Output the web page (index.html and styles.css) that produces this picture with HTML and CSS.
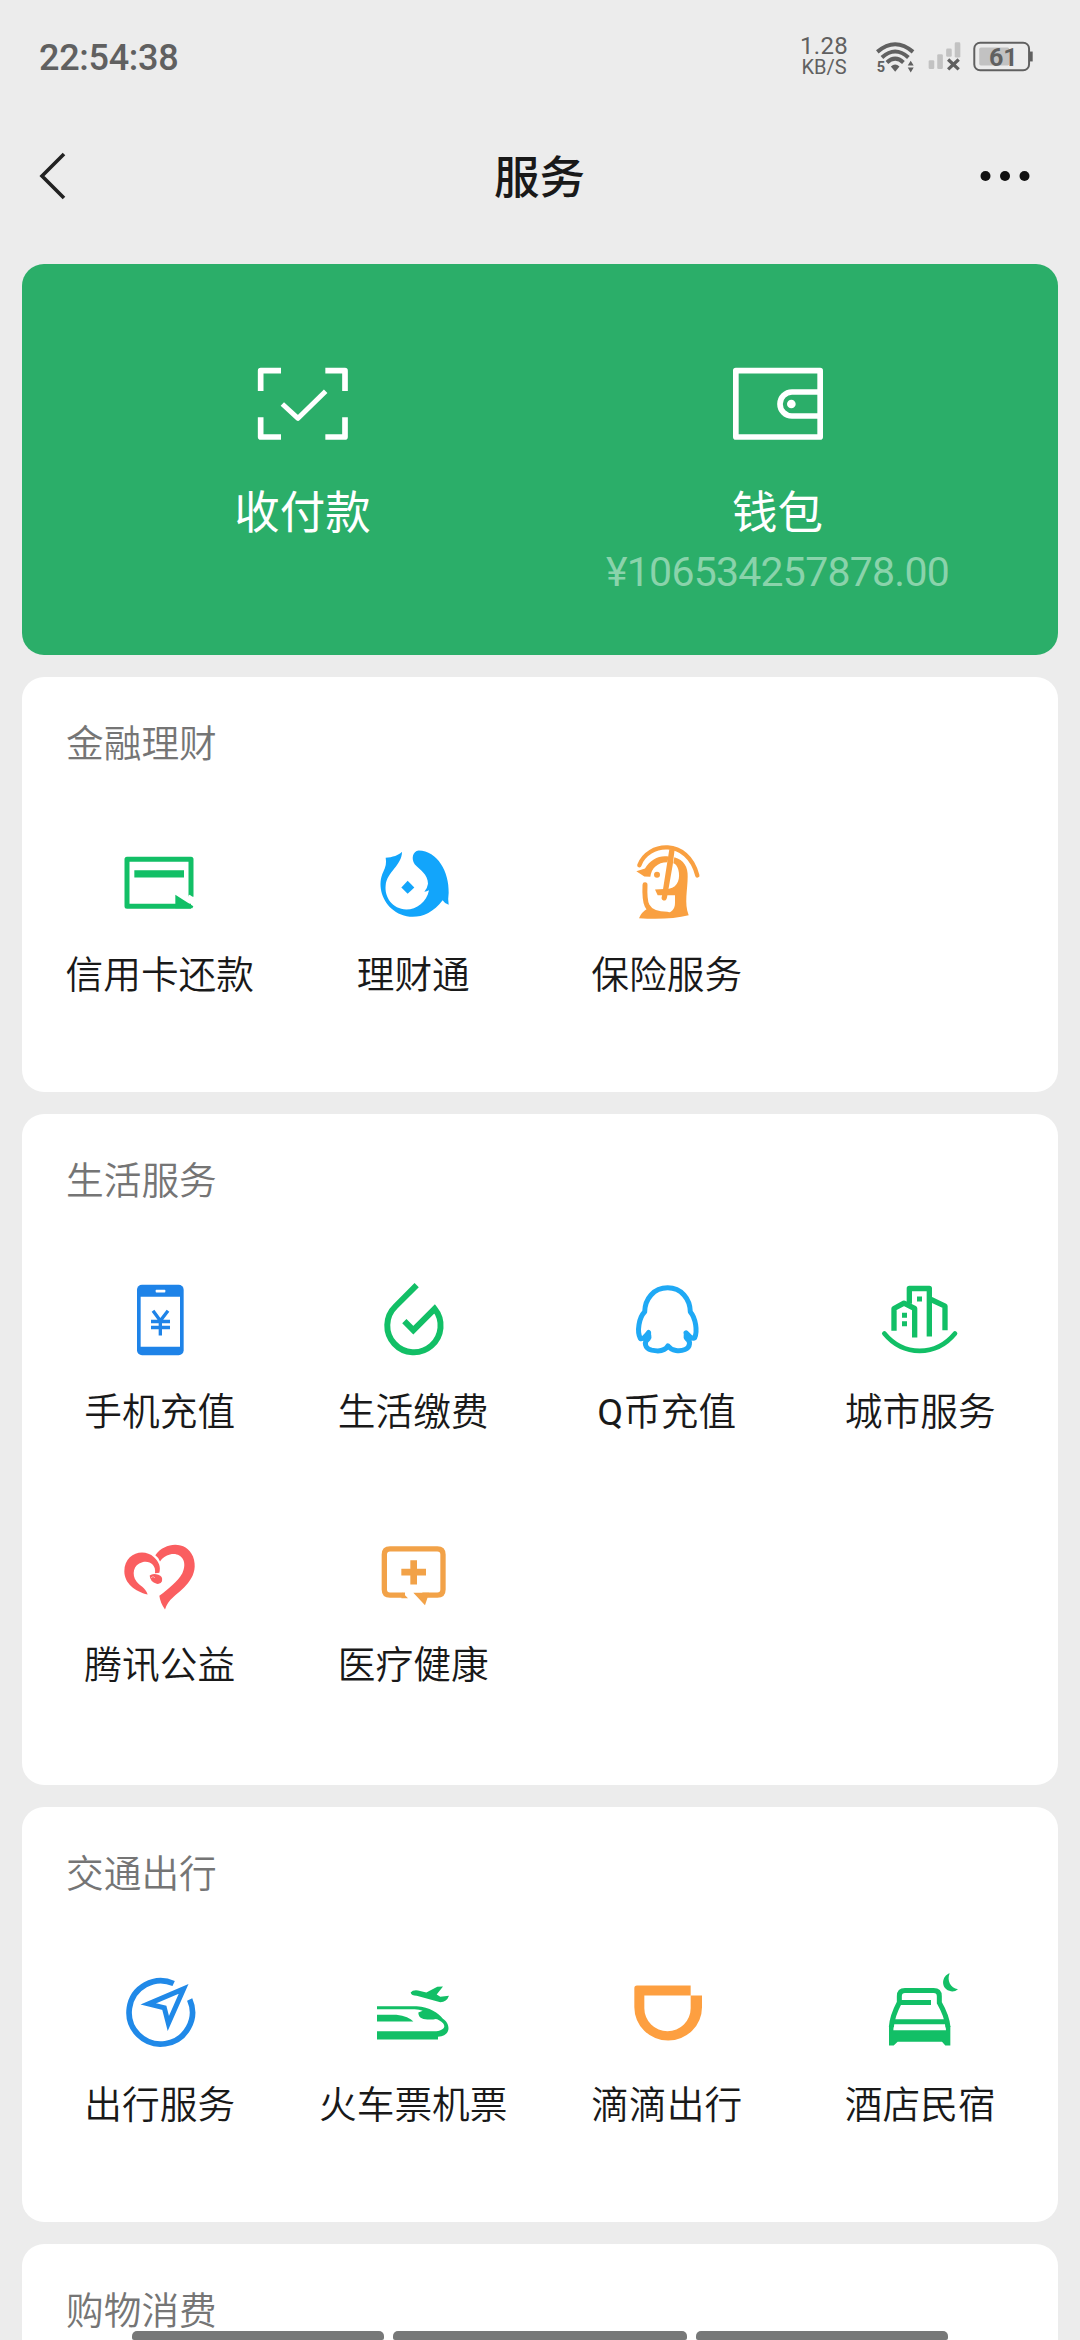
FILE: index.html
```html
<!DOCTYPE html>
<html lang="zh-CN">
<head>
<meta charset="utf-8">
<title>服务</title>
<link rel="stylesheet" href="styles.css">
</head>
<body>
<div class="screen">
  <header class="status">
    <span class="clock">22:54:38</span>
    <div class="status-right">
      <div class="speed"><span class="speed-num">1.28</span><span class="speed-unit">KB/S</span></div>
      <svg class="wifi" viewBox="340 110 130 110">
        <g fill="none" stroke="#606060" stroke-width="12">
          <path d="M350 151Q404 105 458 151"/>
          <path d="M364 168Q404 132 444 168"/>
          <path d="M379 183Q404 160 429 183"/>
        </g>
        <path d="M391 195Q404 183 417 195L404 211Z" fill="#606060"/>
        <path d="M442 192L451 178L460 192ZM442 198L460 198L451 213Z" fill="#606060"/>
        <text class="wifi-five" x="348" y="212">5</text>
      </svg>
      <svg class="signal" viewBox="500 115 104 100">
        <g fill="#c2c2c2">
          <rect x="504" y="176" width="17" height="27" rx="4"/>
          <rect x="530" y="158" width="17" height="45" rx="4"/>
          <rect x="557" y="141" width="17" height="25" rx="4"/>
          <rect x="583" y="122" width="17" height="46" rx="4"/>
        </g>
        <path d="M563 174L595 204M595 174L563 204" stroke="#606060" stroke-width="10"/>
      </svg>
      <svg class="battery" viewBox="633 115 186 100">
        <rect x="654" y="138" width="91" height="54" rx="5" fill="#c2c2c2"/>
        <rect x="639" y="123" width="166" height="84" rx="18" fill="none" stroke="#606060" stroke-width="6"/>
        <path d="M806 150h10v30h-10z" fill="#606060"/>
        <text class="battery-level" x="727" y="195">61</text>
      </svg>
    </div>
  </header>

  <nav class="titlebar">
    <svg class="back" viewBox="0 0 30 52"><path d="M26 4L4 26L26 48" fill="none" stroke="#222" stroke-width="3.6"/></svg>
    <h1 class="title">服务</h1>
    <svg class="more" viewBox="0 0 50 12"><g fill="#111"><circle cx="5.500" cy="6" r="5"/><circle cx="25" cy="6" r="5"/><circle cx="44.500" cy="6" r="5"/></g></svg>
  </nav>

  <main class="cards">
    <section class="pay">
      <div class="pay-item">
        <svg class="pay-icon" viewBox="168 111 276 222">
          <g fill="none" stroke="#fff" stroke-width="17" stroke-linejoin="round">
            <path d="M179 183V122H240M373 122H432V183M432 262V321H373M240 321H179V262"/>
            <path d="M244 222L291 265L374 184" stroke-width="15"/>
          </g>
        </svg>
        <span class="pay-label">收付款</span>
      </div>
      <div class="pay-item">
        <svg class="pay-icon" viewBox="453 111 276 222">
          <g fill="none" stroke="#fff" stroke-width="17">
            <rect x="464.500" y="122" width="253" height="199" stroke-linejoin="round"/>
            <path d="M717 186H633A36 36 0 0 0 633 258H717"/>
          </g>
          <circle cx="631" cy="222" r="13" fill="#fff"/>
        </svg>
        <span class="pay-label">钱包</span>
        <span class="amount">¥106534257878.00</span>
      </div>
    </section>

    <section class="card">
      <h2 class="heading">金融理财</h2>
      <div class="grid">
        <div class="item">
          <svg class="icon" viewBox="344 595.500 270 270">
            <path d="M572 772V659H380V800H572" fill="none" stroke="#12bf66" stroke-width="15" stroke-linejoin="round"/>
            <path d="M402 692H551V714H402ZM525 766L579 800L576 806H525Z" fill="#12bf66"/>
            <path d="M562 770L582 783V776L568 766Z" fill="#fff"/>
          </svg>
          <span class="label">信用卡还款</span>
        </div>
        <div class="item">
          <svg class="icon" viewBox="55 55.500 270 270" fill="#12a5fb">
            <path d="M157 97C148 107 128 114 108 115C111 131 108 143 101 157C83 193 95 240 125 267C164 303 233 304 279 242Q286 253 297 256Q294 242 297 220C299 157 263 94 207 93C189 95 184 118 195 134C210 151 235 163 235 193Q233 207 224 217Q231 216 238 212C231 247 201 270 170 270C128 268 104 233 108 197C112 158 157 137 157 97Z"/>
            <path d="M174 184L194 204L174 223L155 204Z"/>
          </svg>
          <span class="label">理财通</span>
        </div>
        <div class="item">
          <svg class="icon" viewBox="815 55.500 270 270" fill="#f9a041">
            <path d="M867 137C892 68 1012 54 1041 168" fill="none" stroke="#f9a041" stroke-width="13" stroke-linecap="round"/>
            <path d="M858 155L884 147C900 119 928 106 955 111L951 128C921 128 903 147 900 172L882 171Z"/>
            <path d="M884 196C882 244 880 284 951 284" fill="none" stroke="#f9a041" stroke-width="15" stroke-linecap="round"/>
            <path d="M957 89H973L967 137L950 234Q948 245 939 243Q931 240 935 229L945 165Z"/>
            <path d="M972 113C1001 121 1013 143 1012 171C1012 211 1001 251 1015 287Q955 302 866 296Q873 278 892 267Q911 285 942 282C963 281 974 271 974 250V227H922L914 210L956 208C985 203 990 174 984 151Q980 134 969 131Z"/>
            <circle cx="920" cy="166" r="9"/>
          </svg>
          <span class="label">保险服务</span>
        </div>
      </div>
    </section>

    <section class="card card-tall">
      <h2 class="heading">生活服务</h2>
      <div class="grid">
        <div class="item">
          <svg class="icon" viewBox="194 73.500 270 270">
            <rect x="260" y="103" width="140" height="211" rx="15" fill="#1e83e8"/>
            <path d="M271 139H389V289H271Z" fill="#fff"/>
            <rect x="316" y="118" width="29" height="8" rx="2" fill="#fff"/>
            <path d="M308 181L330 211L353 181M330 211V255M302 213H359M302 231H359" fill="none" stroke="#1e83e8" stroke-width="10"/>
          </svg>
          <span class="label">手机充值</span>
        </div>
        <div class="item">
          <svg class="icon" viewBox="955 73.500 270 270">
            <path d="M1101 104L1037 168A80 80 0 1 0 1155 175L1091 239L1064 212" fill="none" stroke="#12bf66" stroke-width="18"/>
          </svg>
          <span class="label">生活缴费</span>
        </div>
        <div class="item">
          <svg class="icon" viewBox="185 73.500 270 270">
            <path d="M322 112C280 112 254 145 253 184C236 202 229 241 240 264C247 268 257 255 265 246C263 258 270 259 264 265C250 273 252 293 274 299C297 304 315 300 323 286C334 302 359 303 374 297C391 290 391 271 379 264C374 258 380 257 377 247C387 257 397 267 403 262C412 241 406 203 390 184C389 145 363 112 322 112Z" fill="none" stroke="#1fa9f5" stroke-width="15" stroke-linejoin="round"/>
          </svg>
          <span class="label"><span class="latin">Q</span>币充值</span>
        </div>
        <div class="item">
          <svg class="icon" viewBox="946 73.500 270 270">
            <g fill="none" stroke="#12bf66" stroke-width="16" stroke-linejoin="round">
              <path d="M1003 241V174L1033 158L1065 174V261"/>
              <path d="M1049 160V114H1109V258M1114 147L1156 167V239"/>
              <path d="M974 249Q1017 301 1080 301Q1143 301 1186 249" stroke-width="14" stroke-linecap="round"/>
            </g>
            <path d="M1027 187h15v15h-15zM1027 212h15v15h-15zM1072 138h15v15h-15z" fill="#12bf66"/>
          </svg>
          <span class="label">城市服务</span>
        </div>
        <div class="item">
          <svg class="icon" viewBox="194 49.500 270 270">
            <path d="M292 249C254 240 222 215 222 179C222 125 280 108 311 137C326 151 332 166 327 184L314 185C318 159 296 146 276 152C248 159 244 190 258 209C267 223 285 226 292 249Z" fill="#fa5e60"/>
            <path d="M315 131C345 90 408 88 428 135C449 193 401 229 370 256Q351 272 344 294Q330 275 327 253C355 231 381 211 396 185C414 148 390 121 359 129Q340 133 329 150Q326 139 315 131Z" fill="#fa5e60"/>
            <path d="M298 192Q308 184 324 190Q338 194 335 209Q331 219 319 217Q299 211 298 192Z" fill="#fa5e60"/>
            <path d="M302 199L308 195L314 199" fill="none" stroke="#fff" stroke-width="2" opacity=".7"/>
          </svg>
          <span class="label">腾讯公益</span>
        </div>
        <div class="item">
          <svg class="icon" viewBox="955 49.500 270 270">
            <path d="M1066 251H1021Q1004 251 1004 234V129Q1004 112 1021 112H1163Q1180 112 1180 129V234Q1180 251 1163 251H1118" fill="none" stroke="#f2a248" stroke-width="16"/>
            <path d="M1058 243L1075 260H1055ZM1091 244H1138L1133 260L1126 281ZM1082 146H1102V172H1129V192H1102V219H1082V192H1055V172H1082Z" fill="#f2a248"/>
          </svg>
          <span class="label">医疗健康</span>
        </div>
      </div>
    </section>

    <section class="card">
      <h2 class="heading">交通出行</h2>
      <div class="grid">
        <div class="item">
          <svg class="icon" viewBox="194 55.500 270 270" fill="none" stroke="#2089e8">
            <path d="M370 102A95 95 0 1 0 418 150" stroke-width="17"/>
            <path d="M400 118L294 163L342 175L354 222Z" stroke-width="15" stroke-miterlimit="10"/>
          </svg>
          <span class="label">出行服务</span>
        </div>
        <div class="item">
          <svg class="icon" viewBox="955 55.500 270 270" fill="#12bf66">
            <path d="M982 170H1101C1140 173 1167 190 1179 207C1202 221 1207 259 1165 262V270H982V245H1150C1182 246 1198 229 1168 212Q1159 206 1151 210C1130 211 1106 211 1106 189L1119 184Q1109 180 1095 179H982Z"/>
            <path d="M982 196H1040Q1078 201 1091 216H982Z"/>
            <path d="M1083 129Q1089 121 1105 123L1130 129L1163 112L1180 111L1161 135L1172 142L1198 139Q1191 158 1172 158L1101 139Q1085 139 1083 129Z"/>
          </svg>
          <span class="label">火车票机票</span>
        </div>
        <div class="item">
          <svg class="icon" viewBox="185 55.500 270 270">
            <path d="M230 108H391V138H252V176A69 69 0 0 0 391 176V138H425V173A101.500 100 0 0 1 222 173V116Q222 108 230 108Z" fill="#fd9f40"/>
          </svg>
          <span class="label">滴滴出行</span>
        </div>
        <div class="item">
          <svg class="icon" viewBox="946 55.500 270 270">
            <g fill="none" stroke="#12bf66" stroke-width="15">
              <path d="M1114 159H1019V140Q1019 123 1036 123H1122Q1139 123 1139 140V160Q1162 200 1165 233M1019 159Q997 201 995 233M1001 217H1160"/>
            </g>
            <path d="M988 230L1003 217L1001 242H1159L1157 217L1172 230V288H1157L1147 277H1014L1002 288H988Z" fill="#12bf66"/>
            <path d="M1170 71C1161 92 1172 115 1195 119Q1183 129 1169 124C1142 114 1146 79 1170 71Z" fill="#12bf66"/>
          </svg>
          <span class="label">酒店民宿</span>
        </div>
      </div>
    </section>

    <section class="card">
      <h2 class="heading">购物消费</h2>
    </section>
  </main>
  <div class="dock"><span class="dock-bar"></span><span class="dock-bar"></span><span class="dock-bar"></span></div>
</div>
</body>
</html>
```
FILE: styles.css
```css
* { box-sizing: border-box; }
body {
  margin: 0;
  background: #ececec;
  font-family: "Noto Sans CJK SC", sans-serif;
  color: #191919;
}
.screen {
  position: relative;
  width: 1080px;
  height: 2340px;
  overflow: hidden;
}
.status {
  height: 112px;
  padding: 0 46px 0 39px;
  display: flex;
  justify-content: space-between;
  align-items: center;
  font-family: Roboto, sans-serif;
  color: #606060;
}
.clock {
  padding-top: 4px;
  font-size: 36px;
  font-weight: 500;
  line-height: 40px;
  letter-spacing: -.3px;
}
.status-right { display: flex; align-items: center; }
.speed {
  display: flex;
  flex-direction: column;
  align-items: center;
  margin-right: 26px;
}
.speed-num { font-size: 24px; line-height: 24px; letter-spacing: .3px; }
.speed-unit { font-size: 20px; line-height: 18px; margin-bottom: 2px; }
.wifi { width: 43px; height: 37px; margin-right: 10px; }
.wifi-five { font: 700 44px Roboto, sans-serif; fill: #606060; }
.signal { width: 35px; height: 33px; margin-right: 10px; }
.battery { width: 62px; height: 33px; }
.battery-level { font: 700 76px Roboto, sans-serif; fill: #606060; text-anchor: middle; }
.titlebar {
  height: 152px;
  padding: 0 50px 24px 38px;
  display: grid;
  grid-template-columns: 38px 1fr 50px;
  align-items: center;
}
.back { width: 30px; height: 52px; }
.title {
  margin: 0 0 4px;
  padding-left: 23px;
  text-align: center;
  font-size: 45.500px;
  font-weight: 500;
  line-height: 60px;
}
.more { width: 50px; height: 12px; }
.cards {
  padding: 0 22px;
  display: flex;
  flex-direction: column;
  gap: 22px;
}
.pay {
  height: 391px;
  padding: 103px 43px 0;
  border-radius: 22px;
  background: #2bae69;
  display: grid;
  grid-template-columns: 1fr 1fr;
  color: #fff;
}
.pay-item { display: flex; flex-direction: column; align-items: center; }
.pay-icon { width: 92px; height: 74px; }
.pay-label { font-size: 45.500px; line-height: 60px; margin-top: 38px; }
.amount {
  margin-top: 11px;
  font-family: Roboto, sans-serif;
  font-size: 41px;
  line-height: 44px;
  letter-spacing: -.75px;
  white-space: nowrap;
  color: #8ad3ab;
}
.card {
  padding: 0 11px 30.500px;
  border-radius: 22px;
  background: #fff;
}
.card-tall { padding-bottom: 34px; }
.heading {
  height: 132px;
  margin: 0 0 0 33px;
  font-size: 37.700px;
  font-weight: 350;
  line-height: 128px;
  color: #757575;
}
.grid { display: grid; grid-template-columns: repeat(4, 1fr); grid-auto-rows: 252.500px; }
.item { display: flex; flex-direction: column; align-items: center; }
.icon { width: 90px; height: 90px; margin-top: 29px; }
.label { margin-top: 18px; font-size: 37.700px; font-weight: 350; line-height: 52px; white-space: nowrap; }
.latin { font-family: Roboto, sans-serif; font-weight: 400; line-height: 1; }
.dock {
  position: absolute;
  left: 132px;
  bottom: 0;
  width: 816px;
  height: 9px;
  display: grid;
  grid-template-columns: 252px 294px 252px;
  gap: 9px;
}
.dock-bar { background: #777878; border-radius: 5px 5px 2px 2px; }
```
